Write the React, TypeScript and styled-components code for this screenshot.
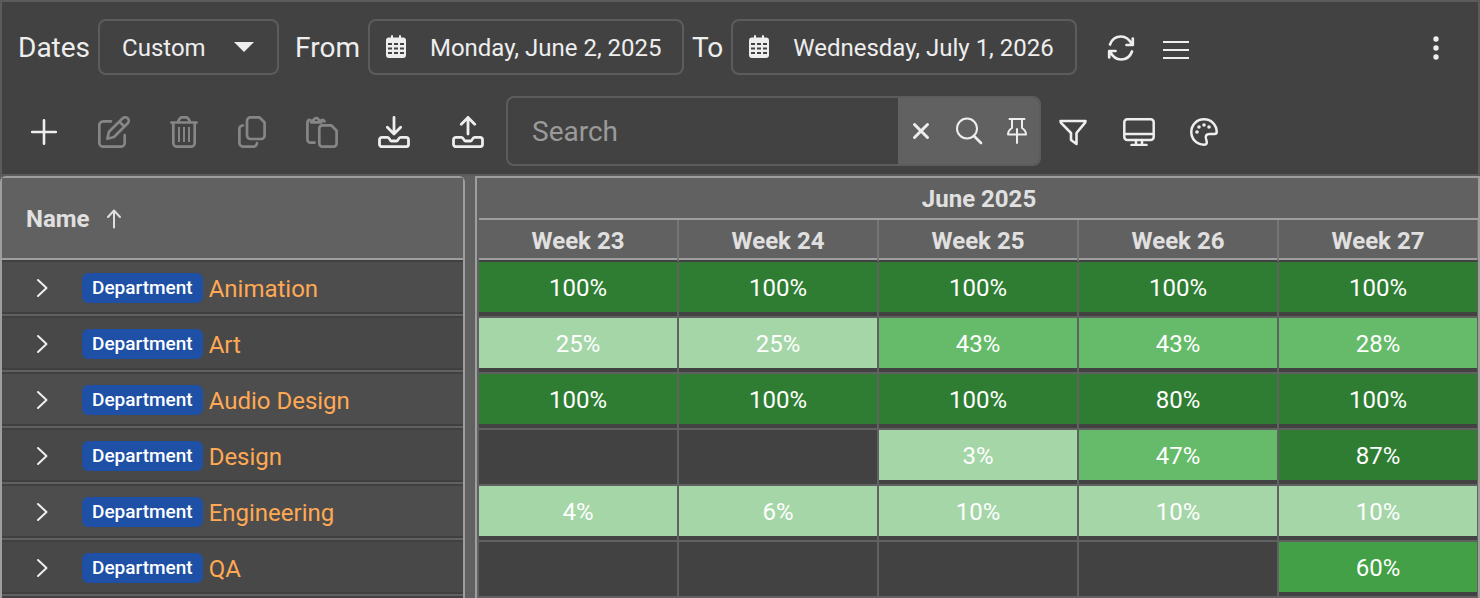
import React from "react";
import styled, { createGlobalStyle, css } from "styled-components";

const Global = createGlobalStyle`
  *, *::before, *::after { box-sizing: border-box; }
  body {
    margin: 0;
    background: #424242;
    color: #eeeeee;
    font-family: Roboto, "Liberation Sans", sans-serif;
    font-size: 24px;
    overflow: hidden;
  }
  button, input, select { font: inherit; color: inherit; }
`;

const Page = styled.div`
  display: flex;
  flex-direction: column;
  min-height: 100vh;
`;

const Toolbars = styled.header`
  border: 2px solid #5c5c5c;
  background: #424242;
  padding-bottom: 4px;
`;

const DateBar = styled.form`
  display: flex;
  align-items: center;
  height: 90px;
  padding: 0 24px 0 16px;
`;

const BarLabel = styled.label`
  padding-top: 2px;
  font-size: 28px;
  line-height: 32px;
  white-space: nowrap;
`;

const SelectBox = styled.div`
  display: flex;
  align-items: center;
  width: 181px;
  height: 56px;
  margin: 0 16px 0 8px;
  padding: 0 23px 0 22px;
  border: 2px solid #5c5c5c;
  border-radius: 8px;
`;

const Select = styled.select`
  flex: 1;
  min-width: 0;
  appearance: none;
  padding: 2px 0 0;
  border: 0;
  outline: 0;
  background: transparent;
`;

const DateBox = styled.div<{ $width: number }>`
  display: flex;
  align-items: center;
  gap: 24px;
  width: ${(p) => p.$width}px;
  height: 56px;
  margin: 0 8px;
  padding: 0 0 0 16px;
  border: 2px solid #5c5c5c;
  border-radius: 8px;
`;

const DateInput = styled.input`
  flex: 1;
  min-width: 0;
  padding: 2px 0 0;
  border: 0;
  outline: 0;
  background: transparent;
`;

const iconReset = css`
  display: flex;
  align-items: center;
  justify-content: center;
  flex: none;
  padding: 0;
  border: 0;
  background: transparent;
`;

const IconButton = styled.button<{ $width: number }>`
  ${iconReset}
  width: ${(p) => p.$width}px;
  height: 56px;
  padding-top: 2px;
  color: #eeeeee;
  &:disabled { color: #868686; }
`;

const DateActions = styled.div`
  display: flex;
  flex: 1;
  margin-left: 8px;
`;

const ActionBar = styled.div`
  display: flex;
  align-items: center;
  height: 78px;
  padding-left: 8px;
`;

const SearchBox = styled.div`
  display: flex;
  width: 535px;
  height: 70px;
  border: 2px solid #5c5c5c;
  border-radius: 8px;
  overflow: hidden;
`;

const SearchInput = styled.input`
  flex: 1;
  min-width: 0;
  padding: 0 24px;
  border: 0;
  outline: 0;
  background: transparent;
  font-size: 28px;
  &::placeholder { color: #9a9a9a; opacity: 1; }
`;

const SearchTools = styled.div`
  display: flex;
  align-items: center;
  padding-bottom: 2px;
  background: #616161;
`;

const Panels = styled.main`
  display: flex;
  flex: 1;
  background: #616161;
`;

const NamePanel = styled.section`
  flex: none;
  width: 465px;
  border: 2px solid #9e9e9e;
  border-bottom: 0;
  border-radius: 6px 6px 0 0;
  background: #424242;
`;

const TimelinePanel = styled.section`
  flex: 1;
  min-width: 0;
  margin-left: 10px;
  padding-left: 2px;
  border: 2px solid #9e9e9e;
  border-bottom: 0;
  background: #616161;
  overflow: hidden;
`;

const Table = styled.table<{ $min?: number }>`
  width: 100%;
  min-width: ${(p) => p.$min ?? 0}px;
  table-layout: fixed;
  border-collapse: separate;
  border-spacing: 0;
`;

const NameHead = styled.th`
  height: 82px;
  padding: 2px 24px 0;
  border-bottom: 2px solid #9e9e9e;
  background: #616161;
  color: #e0e0e0;
  font-weight: 700;
  text-align: left;
`;

const HeadContent = styled.div`
  display: flex;
  align-items: center;
  gap: 16px;
`;

const NameCell = styled.td<{ $odd: boolean }>`
  height: 56px;
  padding: 0;
  border-bottom: 2px solid #616161;
  background: ${(p) => (p.$odd ? "#4d4d4d" : "#484848")};
  box-shadow: inset 0 2px #404040, inset 0 -2px #404040;
`;

const NameContent = styled.div`
  display: flex;
  align-items: center;
  padding: 2px 0 0 24px;
`;

const Expander = styled.button`
  ${iconReset}
  width: 32px;
  height: 32px;
  margin-right: 24px;
`;

const Tag = styled.span`
  height: 30px;
  margin-right: 6px;
  padding: 0 10px;
  border-radius: 6px;
  background: #1e50a6;
  color: #ffffff;
  font-size: 19px;
  font-weight: 500;
  line-height: 30px;
`;

const NameLink = styled.a`
  padding-top: 2px;
  color: #ffa954;
  line-height: 32px;
  text-decoration: none;
`;

const MonthHead = styled.th`
  height: 42px;
  padding: 2px 0 0;
  border-bottom: 2px solid #9e9e9e;
  color: #e0e0e0;
  line-height: 38px;
`;

const WeekHead = styled.th`
  height: 42px;
  padding: 2px 0 0;
  border-right: 2px solid #757575;
  border-bottom: 2px solid #424242;
  box-shadow: inset 0 -2px #9e9e9e;
  color: #e0e0e0;
  line-height: 38px;
`;

const ValueCell = styled.td<{ $fill: string }>`
  height: 56px;
  padding: 0 0 2px;
  border-right: 2px solid #616161;
  border-bottom: 2px solid #616161;
  background: ${(p) => p.$fill};
  box-shadow: inset 0 -4px #424242;
  color: #ffffff;
  text-align: center;
`;

const Svg = ({ w, h, sw = 2, children }: {
  w: number; h: number; sw?: number; children: React.ReactNode;
}) => (
  <svg width={w} height={h} viewBox={`0 0 ${w} ${h}`} fill="none" stroke="currentColor"
    strokeWidth={sw} strokeLinecap="round" strokeLinejoin="round" aria-hidden="true">
    {children}
  </svg>
);

const CalendarIcon = () => (
  <Svg w={20} h={24} sw={2}>
    <rect x="0" y="2.500" width="20" height="20.500" rx="3" fill="currentColor" stroke="none" />
    <path d="M6 1v4M14 1v4" />
    <path d="M2 9h4M8 9h4M14 9h4M2 13.500h4M8 13.500h4M14 13.500h4M2 18h4M8 18h4M14 18h4"
      stroke="#424242" strokeWidth="2" strokeLinecap="butt" />
  </Svg>
);
const PlusIcon = () => <Svg w={28} h={28} sw={2.6}><path d="M14 2.200v23.600M2.200 14h23.600" /></Svg>;
const EditIcon = () => (
  <Svg w={32} h={32} sw={2.7}>
    <path d="M13 5.300H5.300a4 4 0 0 0-4 4v17.400a4 4 0 0 0 4 4h17.400a4 4 0 0 0 4-4v-7.500" />
    <path d="M9.300 22.700l1.700-7L24.700 2.300a3.500 3.500 0 0 1 5 5L16 21zM21.500 5.800l4.800 4.800" />
  </Svg>
);
const TrashIcon = () => (
  <Svg w={28} h={32} sw={2.7}>
    <path d="M1.400 6.500h25.200M3.300 7v20a3.700 3.700 0 0 0 3.700 3.700h14a3.700 3.700 0 0 0 3.700-3.700V7M8 6c1-3 2.500-4.600 4-4.600h4c1.500 0 3 1.600 4 4.600" />
    <path d="M9 11v15M14 11v15M19 11v15" strokeWidth="2" strokeLinecap="butt" />
  </Svg>
);
const CopyIcon = () => (
  <Svg w={28} h={32} sw={2.7}>
    <path d="M12.500 1.400h9l5.100 5.100v13a3.500 3.500 0 0 1-3.500 3.500H12.500A3.500 3.500 0 0 1 9 19.500V4.900a3.500 3.500 0 0 1 3.500-3.500z" />
    <path d="M5 9.500h-.1a3.500 3.500 0 0 0-3.500 3.500v14.100a3.500 3.500 0 0 0 3.500 3.500H15.500a3.500 3.500 0 0 0 3.500-3.500V27" />
  </Svg>
);
const PasteIcon = () => (
  <Svg w={32} h={32} sw={2.7}>
    <path d="M8.500 26.700H4.400a3 3 0 0 1-3-3V6.800a3 3 0 0 1 2.200-2.900M16.500 3.900a3 3 0 0 1 2 1.500" />
    <path d="M5 6.300h10.500c-.5-2-1.500-2.300-3-2.500a2.300 2.300 0 0 0-4.500 0C6.500 4 5.500 4.300 5 6.300z" />
    <path d="M16.300 9.300h8.900l5.400 5.500v12.800a3 3 0 0 1-3 3H16.300a3 3 0 0 1-3-3V12.300a3 3 0 0 1 3-3z" />
  </Svg>
);
const Tray = () => (
  <path d="M4 21.300h5.500c1 0 1.500.6 2 1.700.6 1.300 1 2 2 2h5c1 0 1.400-.7 2-2 .5-1.100 1-1.700 2-1.700H28a2.500 2.500 0 0 1 2.500 2.500v4.400a2.500 2.500 0 0 1-2.500 2.500H4a2.500 2.500 0 0 1-2.500-2.500v-4.400A2.500 2.500 0 0 1 4 21.300z" />
);
const DownloadIcon = () => <Svg w={32} h={32} sw={2.8}><path d="M16 1.500v16.500M9.300 11.300l6.700 6.700 6.700-6.700" /><Tray /></Svg>;
const UploadIcon = () => <Svg w={32} h={32} sw={2.8}><path d="M16 18V1.500M9.300 8.200L16 1.500l6.700 6.700" /><Tray /></Svg>;
const CloseIcon = () => <Svg w={18} h={18} sw={3}><path d="M2.500 2.500l13 13M15.500 2.500l-13 13" /></Svg>;
const SearchIcon = () => <Svg w={28} h={28} sw={2}><circle cx="12" cy="11.500" r="10" /><path d="M19 19l7 7" strokeWidth="2.600" /></Svg>;
const PinIcon = () => <Svg w={20} h={28} sw={2}><path d="M2.500 2h15M5 2v9c-2.500 1.500-4 4-4 6.500h18c0-2.500-1.500-5-4-6.500V2M10 12v14" /></Svg>;
const FilterIcon = () => <Svg w={28} h={28} sw={2.6}><path d="M1.500 3h25c0 1-.3 1.500-.8 2.100L17.500 15v11l-5.500-4v-7L2.300 5.100C1.800 4.500 1.500 4 1.500 3z" /></Svg>;
const MonitorIcon = () => (
  <Svg w={32} h={28} sw={2.5}>
    <rect x="1.300" y="1.300" width="29.400" height="20.700" rx="3" />
    <path d="M1.500 16h29M13 22v4.500M19 22v4.500M8.500 27h15" />
  </Svg>
);
const PaletteIcon = () => (
  <Svg w={28} h={28} sw={2.5}>
    <path d="M14 1.300C6.500 1.300 1.300 7 1.300 14S6.500 26.700 14 26.700c3 0 3.300-1.800 2.300-4.700-1.500-4 0-6 3.200-6h4.700c2 0 2.500-.8 2.500-2C26.700 7 21.500 1.300 14 1.300z" />
    <g fill="currentColor" stroke="none"><circle cx="7" cy="14" r="1.800" /><circle cx="9" cy="9" r="1.800" /><circle cx="14" cy="7" r="1.800" /><circle cx="19" cy="9" r="1.800" /></g>
  </Svg>
);
const RefreshIcon = () => (
  <Svg w={28} h={28} sw={2.7}>
    <path d="M3 10.500C5 5 9 2.500 14 2.500c5 0 8.500 3 11 8M25.800 4.500v6.500H19.500M25 17.500c-2 5.500-6 8-11 8-5 0-8.500-3-11-8M2.200 23.500V17h6.300" />
  </Svg>
);
const MenuIcon = () => <Svg w={26} h={24}><path d="M0 6h26M0 14h26M0 22h26" strokeLinecap="butt" /></Svg>;
const DotsIcon = () => (
  <Svg w={6} h={24}><g fill="currentColor" stroke="none"><circle cx="3" cy="3" r="2.700" /><circle cx="3" cy="12" r="2.700" /><circle cx="3" cy="21" r="2.700" /></g></Svg>
);
const CaretIcon = () => <Svg w={20} h={10}><path d="M0 0h20L10 10z" fill="currentColor" stroke="none" /></Svg>;
const ArrowUpIcon = () => <Svg w={16} h={20} sw={2}><path d="M8 18.500V2M2 8l6-6.500L14 8" /></Svg>;
const ChevronIcon = () => <Svg w={12} h={20} sw={2}><path d="M2 2l8.500 8L2 18" /></Svg>;

const FILL: Record<string, string> = {
  none: "#424242", low: "#a5d6a7", mid: "#66bb6a", good: "#43a047", full: "#2e7d32",
};
const fillFor = (v: number | null) =>
  FILL[v === null ? "none" : v <= 25 ? "low" : v <= 50 ? "mid" : v < 75 ? "good" : "full"];

const weeks = [23, 24, 25, 26, 27];
const rows: { name: string; values: (number | null)[] }[] = [
  { name: "Animation", values: [100, 100, 100, 100, 100] },
  { name: "Art", values: [25, 25, 43, 43, 28] },
  { name: "Audio Design", values: [100, 100, 100, 80, 100] },
  { name: "Design", values: [null, null, 3, 47, 87] },
  { name: "Engineering", values: [4, 6, 10, 10, 10] },
  { name: "QA", values: [null, null, null, null, 60] },
];

export default function App() {
  return (
    <Page>
      <Global />
      <Toolbars>
        <DateBar>
          <BarLabel htmlFor="range">Dates</BarLabel>
          <SelectBox>
            <Select id="range"><option>Custom</option></Select>
            <CaretIcon />
          </SelectBox>
          <BarLabel htmlFor="from">From</BarLabel>
          <DateBox $width={316}>
            <CalendarIcon />
            <DateInput id="from" defaultValue="Monday, June 2, 2025" />
          </DateBox>
          <BarLabel htmlFor="to">To</BarLabel>
          <DateBox $width={346}>
            <CalendarIcon />
            <DateInput id="to" defaultValue="Wednesday, July 1, 2026" />
          </DateBox>
          <DateActions>
            <IconButton type="button" $width={56} aria-label="Refresh"><RefreshIcon /></IconButton>
            <IconButton type="button" $width={54} aria-label="Menu"><MenuIcon /></IconButton>
          </DateActions>
          <IconButton type="button" $width={36} aria-label="More"><DotsIcon /></IconButton>
        </DateBar>
        <ActionBar>
          <IconButton $width={68} aria-label="Add"><PlusIcon /></IconButton>
          <IconButton $width={72} aria-label="Edit" disabled><EditIcon /></IconButton>
          <IconButton $width={68} aria-label="Delete" disabled><TrashIcon /></IconButton>
          <IconButton $width={68} aria-label="Copy" disabled><CopyIcon /></IconButton>
          <IconButton $width={72} aria-label="Paste" disabled><PasteIcon /></IconButton>
          <IconButton $width={72} aria-label="Download"><DownloadIcon /></IconButton>
          <IconButton $width={76} aria-label="Upload"><UploadIcon /></IconButton>
          <SearchBox>
            <SearchInput type="text" placeholder="Search" aria-label="Search" />
            <SearchTools>
              <IconButton $width={46} aria-label="Clear"><CloseIcon /></IconButton>
              <IconButton $width={50} aria-label="Find"><SearchIcon /></IconButton>
              <IconButton $width={45} aria-label="Pin"><PinIcon /></IconButton>
            </SearchTools>
          </SearchBox>
          <IconButton $width={64} aria-label="Filter"><FilterIcon /></IconButton>
          <IconButton $width={68} aria-label="Display"><MonitorIcon /></IconButton>
          <IconButton $width={62} aria-label="Colors"><PaletteIcon /></IconButton>
        </ActionBar>
      </Toolbars>
      <Panels>
        <NamePanel>
          <Table>
            <thead>
              <tr><NameHead scope="col"><HeadContent>Name<ArrowUpIcon /></HeadContent></NameHead></tr>
            </thead>
            <tbody>
              {rows.map((r, i) => (
                <tr key={r.name}>
                  <NameCell $odd={i % 2 === 0}>
                    <NameContent>
                      <Expander aria-label={`Expand ${r.name}`}><ChevronIcon /></Expander>
                      <Tag>Department</Tag>
                      <NameLink href="#">{r.name}</NameLink>
                    </NameContent>
                  </NameCell>
                </tr>
              ))}
            </tbody>
          </Table>
        </NamePanel>
        <TimelinePanel>
          <Table $min={1000}>
            <thead>
              <tr><MonthHead colSpan={5}>June 2025</MonthHead></tr>
              <tr>{weeks.map((w) => <WeekHead key={w} scope="col">Week {w}</WeekHead>)}</tr>
            </thead>
            <tbody>
              {rows.map((r) => (
                <tr key={r.name}>
                  {r.values.map((v, i) => (
                    <ValueCell key={weeks[i]} $fill={fillFor(v)}>{v === null ? "" : `${v}%`}</ValueCell>
                  ))}
                </tr>
              ))}
            </tbody>
          </Table>
        </TimelinePanel>
      </Panels>
    </Page>
  );
}
